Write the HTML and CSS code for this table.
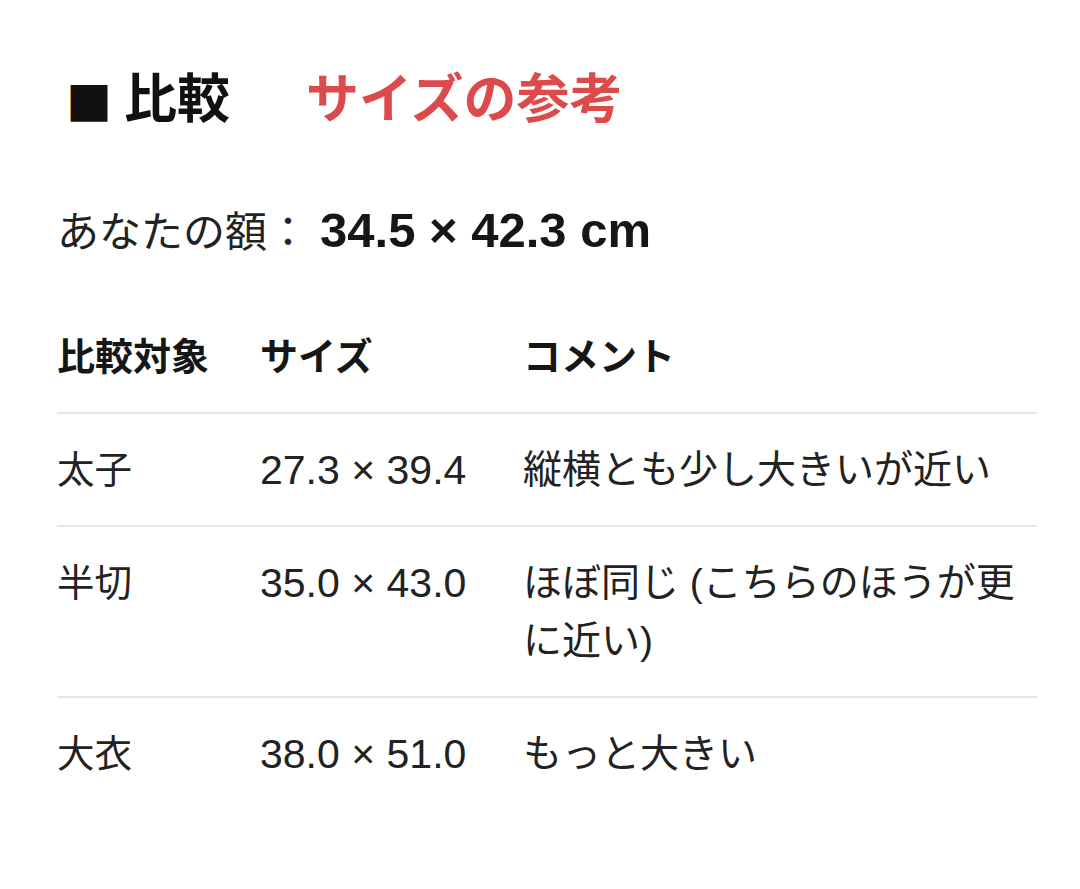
FILE: index.html
```html
<!DOCTYPE html>
<html lang="ja">
<head>
<meta charset="utf-8">
<link rel="stylesheet" href="styles.css">
</head>
<body>
<main class="page">
  <h2 class="title"><span class="title-main"><span class="mark">■</span>比較</span><span class="title-sub">サイズの参考</span></h2>
  <p class="yours">あなたの額：<span class="yours-value">34.5 × 42.3 cm</span></p>
  <div class="table">
    <div class="row head">
      <div class="cell">比較対象</div>
      <div class="cell">サイズ</div>
      <div class="cell">コメント</div>
    </div>
    <div class="row">
      <div class="cell">太子</div>
      <div class="cell num">27.3 × 39.4</div>
      <div class="cell note">縦横とも少し大きいが近い</div>
    </div>
    <div class="row">
      <div class="cell">半切</div>
      <div class="cell num">35.0 × 43.0</div>
      <div class="cell note">ほぼ同じ (こちらのほうが更に近い)</div>
    </div>
    <div class="row last">
      <div class="cell">大衣</div>
      <div class="cell num">38.0 × 51.0</div>
      <div class="cell note">もっと大きい</div>
    </div>
  </div>
</main>
</body>
</html>
```

FILE: styles.css
```css
html, body {
  margin: 0;
  padding: 0;
  background: #ffffff;
}
body {
  font-family: "Liberation Sans", "Noto Sans CJK JP", sans-serif;
  color: #1c1c1c;
}
.page {
  padding: 58px 43px 0 57px;
}
.title {
  margin: 0;
  font-size: 53px;
  line-height: 84px;
  font-weight: 700;
  display: flex;
  align-items: center;
  gap: 76px;
}
.title-main {
  color: #111;
  display: flex;
  align-items: center;
}
.mark {
  font-family: "Noto Sans CJK JP", sans-serif;
  font-size: 46px;
  margin-left: 9px;
  margin-right: 12px;
}
.title-sub {
  color: #dc4a4b;
}
.yours {
  margin: 59px 0 0 0;
  font-size: 42px;
  line-height: 58px;
  color: #222;
}
.yours-value {
  font-weight: 700;
  font-size: 49px;
  color: #161616;
  margin-left: 11px;
}
.table {
  margin-top: 39px;
}
.row {
  display: grid;
  grid-template-columns: 203px 263px 1fr;
  border-bottom: 2px solid #e6e6e6;
  padding: 27px 0 26px;
  font-size: 37.5px;
  line-height: 58px;
  color: #222;
}
.row.last {
  border-bottom: none;
}
.row.head {
  font-weight: 700;
  font-size: 38px;
  color: #161616;
}
.num {
  font-size: 41px;
}
.note {
  font-size: 39px;
}
```
